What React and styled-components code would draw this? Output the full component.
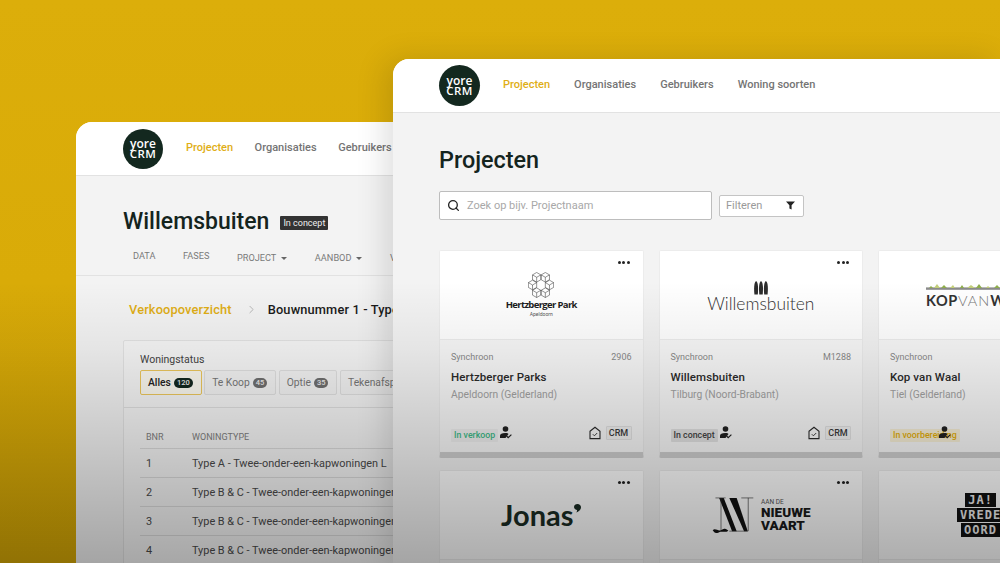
import React from "react";
import styled, { createGlobalStyle } from "styled-components";
import { Search, ChevronRight } from "lucide-react";

const Global = createGlobalStyle`
  html, body { margin: 0; padding: 0; overflow: hidden; background: #c99f06; }
  * { box-sizing: border-box; }
  body { font-family: Roboto, "Liberation Sans", sans-serif; }
`;

const Stage = styled.div`
  position: relative;
  width: 1000px;
  height: 563px;
  overflow: hidden;
  background: linear-gradient(180deg, #dcae0a 0%, #d6a806 100%);
`;
const Shade = styled.div`
  position: absolute;
  inset: 0;
  z-index: 5;
  pointer-events: none;
  background: linear-gradient(180deg, rgba(0,0,0,0) 0%, rgba(0,0,0,0) 50%, rgba(0,0,0,.06) 62%, rgba(0,0,0,.32) 100%);
`;
const Window = styled.section`
  position: absolute;
  left: ${p => p.$left}px;
  top: ${p => p.$top}px;
  width: ${p => p.$width}px;
  height: ${p => p.$height}px;
  z-index: ${p => p.$z};
  border-radius: 16px 0 0 0;
  background: #f3f3f3;
  overflow: hidden;
  box-shadow: ${p => p.$z > 1 ? "-8px 0 30px rgba(0,0,0,.13)" : "none"};
`;
const Header = styled.header`
  display: flex;
  align-items: center;
  height: ${p => p.$h}px;
  padding-left: ${p => p.$pad}px;
  background: #fff;
  border-bottom: 1px solid #e2e2e2;
`;
const LogoMark = styled.div`
  flex: none;
  width: ${p => p.$size}px;
  height: ${p => p.$size}px;
  border-radius: 50%;
  background: #13281f;
  color: #fff;
  display: flex;
  flex-direction: column;
  align-items: center;
  justify-content: center;
  font-family: "Open Sans", sans-serif;
  font-weight: 600;
  line-height: 10px;
`;
const LogoWord = styled.span`
  font-size: ${p => p.$size}px;
  letter-spacing: ${p => p.$track}px;
`;
const Nav = styled.nav`
  display: flex;
  align-items: center;
  gap: ${p => p.$gap}px;
  margin-left: 23px;
  margin-top: -2px;
`;
const NavLink = styled.span`
  font-size: 11px;
  font-weight: 500;
  white-space: nowrap;
  color: ${p => p.$active ? "#e0ae16" : "#747474"};
`;

/* front window */
const Main = styled.main`
  padding: 33px 0 0 46px;
`;
const PageTitle = styled.h1`
  margin: 0;
  font-size: 23.4px;
  line-height: 28px;
  font-weight: 500;
  color: #14241d;
`;
const Toolbar = styled.div`
  display: flex;
  align-items: center;
  gap: 7px;
  margin-top: 17px;
`;
const SearchBox = styled.div`
  display: flex;
  align-items: center;
  gap: 7px;
  width: 273px;
  height: 29px;
  padding-left: 7px;
  background: #fff;
  border: 1px solid #bdbdbd;
  border-radius: 2px;
  color: #a8a8a8;
  font-size: 11px;
  svg { color: #222; flex: none; }
`;
const FilterBox = styled.div`
  display: flex;
  align-items: center;
  justify-content: space-between;
  width: 85px;
  height: 22px;
  padding: 0 8px 0 6px;
  background: #fff;
  border: 1px solid #c4c4c4;
  border-radius: 2px;
  color: #9a9a9a;
  font-size: 11px;
`;
const CardGrid = styled.div`
  display: grid;
  grid-template-columns: repeat(3, 204.5px);
  column-gap: 15px;
  row-gap: 12px;
  margin-top: 30px;
`;
const Card = styled.article`
  display: flex;
  flex-direction: column;
  height: 208px;
  background: #f8f8f8;
  border: 1px solid #ececec;
  border-bottom: 6px solid #cfcfcf;
  border-radius: 2px;
  overflow: hidden;
`;
const CardTop = styled.div`
  position: relative;
  flex: none;
  height: 89px;
  background: #fff;
  border-bottom: 1px solid #ededed;
  display: flex;
  align-items: center;
  justify-content: ${p => p.$start ? "flex-start" : "center"};
  padding-left: ${p => p.$start || 0}px;
`;
const Dots = styled.span`
  position: absolute;
  top: 10px;
  right: 13px;
  display: flex;
  gap: 1.5px;
  i { width: 3px; height: 3px; border-radius: 50%; background: #222; }
`;
const CardBody = styled.div`
  flex: 1;
  display: flex;
  flex-direction: column;
  padding: 11px 11px 10px 11px;
`;
const MetaRow = styled.div`
  display: flex;
  justify-content: space-between;
  font-size: 9px;
  line-height: 12px;
  color: #8a8a8a;
`;
const CardName = styled.div`
  margin-top: 6px;
  font-size: 11.5px;
  line-height: 16px;
  font-weight: 500;
  color: #2b2b2b;
  letter-spacing: .1px;
`;
const CardPlace = styled.div`
  margin-top: 2px;
  font-size: 10.3px;
  line-height: 15px;
  color: #a2a2a2;
`;
const CardFoot = styled.div`
  margin-top: auto;
  display: flex;
  align-items: center;
  justify-content: space-between;
`;
const Status = styled.div`
  display: flex;
  align-items: center;
`;
const StatusSlot = styled.div`
  width: 49px;
`;
const StatusBadge = styled.span`
  display: inline-block;
  padding: 0 3px;
  height: 13px;
  line-height: 13px;
  font-size: 8.8px;
  font-weight: 500;
  white-space: nowrap;
  border-radius: 1px;
  color: ${p => p.$color};
  background: ${p => p.$bg};
`;
const Tools = styled.div`
  display: flex;
  align-items: center;
  gap: 5px;
`;
const CrmChip = styled.span`
  display: inline-block;
  width: 26px;
  height: 14px;
  line-height: 13px;
  text-align: center;
  font-size: 9px;
  font-weight: 500;
  color: #3a3a3a;
  background: #f2f2f2;
  border: 1px solid #e2e2e2;
  border-radius: 1px;
`;

/* logos */
const LogoStack = styled.div`
  display: flex;
  flex-direction: column;
  align-items: center;
  color: #1d1d1d;
  margin-top: ${p => p.$mt || 0}px;
`;
const HertzName = styled.div`
  margin-top: 1px;
  font-family: "Open Sans", sans-serif;
  font-weight: 700;
  font-size: 9.5px;
  line-height: 12px;
  letter-spacing: -.65px;
  white-space: nowrap;
`;
const HertzSub = styled.div`
  font-size: 5px;
  line-height: 6px;
  color: #555;
`;
const WillemsName = styled.div`
  font-family: Lato, sans-serif;
  font-weight: 300;
  font-size: 17.4px;
  line-height: 18px;
  color: #333;
`;
const KopWrap = styled.div`
  display: flex;
  flex-direction: column;
  white-space: nowrap;
`;
const KopName = styled.div`
  font-family: Lato, sans-serif;
  font-size: 14.5px;
  line-height: 15px;
  letter-spacing: .6px;
  font-weight: 700;
  color: #333;
  margin-top: 3px;
  span { font-weight: 300; color: #777; letter-spacing: 1px; }
`;
const JonasName = styled.div`
  display: flex;
  align-items: flex-start;
  font-family: Lato, sans-serif;
  font-weight: 700;
  font-size: 29px;
  line-height: 30px;
  color: #1a2c24;
  margin-top: -1px;
  svg { margin: 4px 0 0 1px; }
`;
const VaartLogo = styled.div`
  display: flex;
  align-items: center;
  gap: 6px;
`;
const VaartText = styled.div`
  display: flex;
  flex-direction: column;
  font-weight: 900;
  font-size: 13.5px;
  line-height: 13px;
  color: #1a1a1a;
  small { font-size: 6.5px; line-height: 8px; font-weight: 400; color: #555; }
`;
const JaLogo = styled.div`
  display: flex;
  flex-direction: column;
  align-items: center;
  gap: 1px;
  white-space: nowrap;
`;
const JaLine = styled.span`
  display: block;
  padding: 0 3px;
  background: #111;
  color: #eee;
  font-family: "DejaVu Sans Mono", monospace;
  font-weight: 700;
  font-size: 12px;
  line-height: 14px;
  letter-spacing: 1px;
`;

/* rear window */
const Rear = styled.div`
  padding: 32px 0 0 47px;
`;
const TitleRow = styled.div`
  display: flex;
  align-items: center;
  gap: 11px;
`;
const RearTitle = styled.h2`
  margin: 0;
  font-size: 23px;
  line-height: 28px;
  font-weight: 500;
  color: #14241d;
`;
const ConceptBadge = styled.span`
  margin-top: 2px;
  padding: 0 3px;
  height: 14px;
  line-height: 14px;
  font-size: 9px;
  color: #eee;
  background: #333;
  border-radius: 1px;
`;
const Tabs = styled.div`
  display: flex;
  align-items: flex-start;
  gap: 27.5px;
  margin: 14px 0 0 10px;
  height: 25px;
`;
const Tab = styled.span`
  display: flex;
  align-items: center;
  gap: 5px;
  margin-top: ${p => p.$menu ? 2 : 0}px;
  font-size: 9.2px;
  line-height: 12px;
  white-space: nowrap;
  color: #7a7a7a;
`;
const Caret = styled.i`
  width: 0;
  height: 0;
  border-left: 3.5px solid transparent;
  border-right: 3.5px solid transparent;
  border-top: 3.5px solid #666;
`;
const Rule = styled.div`
  height: 1px;
  margin-left: -47px;
  background: #e2e2e2;
`;
const Crumbs = styled.div`
  display: flex;
  align-items: center;
  margin: 25px 0 0 6px;
  height: 17px;
  font-size: 12.8px;
  font-weight: 500;
  white-space: nowrap;
  letter-spacing: .15px;
  svg { flex: none; margin: 0 10px 0 13px; color: #aaa; }
`;
const CrumbLink = styled.span`
  color: #e0ae16;
`;
const CrumbHere = styled.span`
  color: #1b1b1b;
`;
const Panel = styled.div`
  margin-top: 22px;
  background: #f6f6f6;
  border: 1px solid #e3e3e3;
  border-radius: 2px 0 0 0;
`;
const PanelHead = styled.div`
  padding: 12px 0 12px 16px;
  border-bottom: 1px solid #e0e0e0;
`;
const PanelLabel = styled.div`
  font-size: 10.5px;
  line-height: 14px;
  color: #444;
`;
const Pills = styled.div`
  display: flex;
  gap: 2.5px;
  margin-top: 3px;
`;
const Pill = styled.span`
  display: flex;
  align-items: center;
  gap: 3px;
  flex: none;
  height: 25px;
  padding: 0 8px 0 7px;
  font-size: 10.3px;
  font-weight: ${p => p.$active ? 500 : 400};
  white-space: nowrap;
  border-radius: 2px;
  color: ${p => p.$active ? "#222" : "#777"};
  background: ${p => p.$active ? "#fbf9f0" : "#f3f3f3"};
  border: 1px solid ${p => p.$active ? "#ecc75c" : "#e0e0e0"};
`;
const Count = styled.b`
  display: inline-block;
  min-width: 14px;
  height: 10px;
  padding: 0 3px;
  line-height: 10px;
  border-radius: 5px;
  font-size: 7.5px;
  font-weight: 500;
  text-align: center;
  color: #eee;
  background: ${p => p.$dark ? "#13281f" : "#6f6f6f"};
`;
const Table = styled.div`
  padding: 17px 0 0 16px;
`;
const TableRow = styled.div`
  display: grid;
  grid-template-columns: 46px 1fr;
  align-items: center;
  height: ${p => p.$head ? 24 : 29}px;
  padding-left: 6px;
  white-space: nowrap;
  border-bottom: 1px solid #dcdcdc;
  font-size: ${p => p.$head ? 9 : 10.9}px;
  color: ${p => p.$head ? "#808080" : "#4a4a4a"};
`;

const Cube = ({ x, y }) => (
  <g transform={`translate(${x} ${y})`} fill="none" stroke="#333" strokeWidth=".55">
    <path d="M0-5 4.3-2.5V2.5L0 5-4.3 2.5V-2.5Z" />
    <path d="M-4.3-2.5 0 0 4.3-2.5M0 0V5" />
  </g>
);
const HertzIcon = () => (
  <svg width="26" height="26" viewBox="-13.5 -13.5 27 27" aria-hidden="true">
    <Cube x={-4.5} y={-8} />
    <Cube x={4.5} y={-8} />
    <Cube x={-8.8} y={0} />
    <Cube x={8.8} y={0} />
    <Cube x={-4.5} y={8} />
    <Cube x={4.5} y={8} />
  </svg>
);
const PlumeIcon = () => (
  <svg width="14" height="14" viewBox="0 0 14 14" aria-hidden="true" fill="#2c2c2c">
    <path d="M.4 13.5C-.2 7 0 1.5 2.1 0 4.2 1.5 4.4 7 3.8 13.5Z" />
    <path d="M5.3 13.5C4.7 7 4.9 1.5 7 0 9.1 1.5 9.3 7 8.7 13.5Z" />
    <path d="M10.2 13.5C9.6 7 9.8 1.5 11.9 0 14 1.5 14.2 7 13.6 13.5Z" />
  </svg>
);
const Treeline = () => (
  <svg width="120" height="7" viewBox="0 0 120 7" aria-hidden="true" style={{ display: "block" }}>
    <rect x="0" y="4.4" width="120" height="2.4" fill="#8b8b8b" />
    <path d="M3 5 5 3 7 5ZM15 5 18 2 21 5ZM34 5 36 2 38 5ZM50 5 53 1 56 5ZM68 5 71 2 74 5ZM90 5 93 2 96 5Z" fill="#8fae4c" />
    <path d="M8 5 11 1 14 5ZM24 5 27 2 29 5ZM41 5 45 2 49 5ZM60 5 62 3 64 5ZM80 5 83 1 86 5ZM100 5 104 1 108 5Z" fill="#c3cf7a" />
  </svg>
);
const VaartIcon = () => (
  <svg width="44" height="36" viewBox="0 0 44 39" aria-hidden="true">
    <path d="M7 1H12L26 37H21Z" fill="#111" />
    <path d="M18 1H26L38 37H34Z" fill="#111" />
    <path d="M3 1H14M31 1H44M38.5 1V37M9 1V36M18 37H38" stroke="#333" strokeWidth=".7" fill="none" />
    <path d="M0 36C3 33 6 38 10 35.5S15 35 17 36.5C14 39 10 36.5 7 38.2S2 39 0 36Z" fill="#111" />
  </svg>
);
const JonasMark = () => (
  <svg width="7" height="9" viewBox="0 0 7 9" aria-hidden="true">
    <path d="M3.5 0C5.5 0 7 1.4 7 3.2 7 5.5 4.8 7.8 2.4 8.6 3 7.2 3.2 6.3 3 5.9 1.4 5.7 0 4.6 0 3 0 1.3 1.6 0 3.5 0Z" fill="#1a2c24" />
  </svg>
);
const PersonCheck = () => (
  <svg width="12" height="13" viewBox="0 0 12 13" aria-hidden="true">
    <circle cx="5.5" cy="3" r="2.8" fill="#222" />
    <path d="M0 12V9.8C0 8 2 7 5 7S8 7.5 8.5 8L5.5 12Z" fill="#222" />
    <path d="M6.6 10 8.2 11.6 11.4 8.6" stroke="#222" strokeWidth="1.2" fill="none" />
  </svg>
);
const HouseCheck = () => (
  <svg width="12" height="14" viewBox="0 0 12 14" aria-hidden="true" fill="none" stroke="#2a2a2a">
    <path d="M1 5.2 6 1.2 11 5.2V12.6H1Z" strokeWidth="1.1" />
    <path d="M3.8 8.2 5.4 9.8 8.2 7" strokeWidth=".9" />
  </svg>
);
const Funnel = () => (
  <svg width="9" height="9" viewBox="0 0 9 9" aria-hidden="true">
    <path d="M0 .5H9L5.6 4.3V8.6L3.4 7.4V4.3Z" fill="#222" />
  </svg>
);

const MoreDots = () => <Dots><i /><i /><i /></Dots>;

const CardItem = ({ logo, meta, code, name, place, badge, bg, color, cut, start }) => (
  <Card>
    <CardTop $start={start}>
      {logo}
      {!cut && <MoreDots />}
    </CardTop>
    <CardBody>
      <MetaRow><span>{meta}</span><span>{code}</span></MetaRow>
      <CardName>{name}</CardName>
      <CardPlace>{place}</CardPlace>
      <CardFoot>
        <Status>
          <StatusSlot><StatusBadge $bg={bg} $color={color}>{badge}</StatusBadge></StatusSlot>
          <PersonCheck />
        </Status>
        <Tools><HouseCheck /><CrmChip>CRM</CrmChip></Tools>
      </CardFoot>
    </CardBody>
  </Card>
);

const Logo = ({ size }) => (
  <LogoMark $size={size}>
    <LogoWord $size={12} $track={0}>yore</LogoWord>
    <LogoWord $size={11.5} $track={.5}>CRM</LogoWord>
  </LogoMark>
);

const rows = [
  ["1", "Type A - Twee-onder-een-kapwoningen L"],
  ["2", "Type B & C - Twee-onder-een-kapwoningen M"],
  ["3", "Type B & C - Twee-onder-een-kapwoningen M"],
  ["4", "Type B & C - Twee-onder-een-kapwoningen M"],
];

export default function App() {
  return (
    <Stage>
      <Global />
      <Window $left={76} $top={122} $width={330} $height={441} $z={1}>
        <Header $h={54} $pad={47}>
          <Logo size={40} />
          <Nav $gap={21.5}>
            <NavLink $active>Projecten</NavLink>
            <NavLink>Organisaties</NavLink>
            <NavLink>Gebruikers</NavLink>
          </Nav>
        </Header>
        <Rear>
          <TitleRow>
            <RearTitle>Willemsbuiten</RearTitle>
            <ConceptBadge>In concept</ConceptBadge>
          </TitleRow>
          <Tabs>
            <Tab>DATA</Tab>
            <Tab>FASES</Tab>
            <Tab $menu>PROJECT <Caret /></Tab>
            <Tab $menu>AANBOD <Caret /></Tab>
            <Tab $menu>VERKOOP</Tab>
          </Tabs>
          <Rule />
          <Crumbs>
            <CrumbLink>Verkoopoverzicht</CrumbLink>
            <ChevronRight size={13} strokeWidth={1.5} />
            <CrumbHere>Bouwnummer 1 - Type A</CrumbHere>
          </Crumbs>
          <Panel>
            <PanelHead>
              <PanelLabel>Woningstatus</PanelLabel>
              <Pills>
                <Pill $active>Alles <Count $dark>120</Count></Pill>
                <Pill>Te Koop <Count>45</Count></Pill>
                <Pill>Optie <Count>35</Count></Pill>
                <Pill>Tekenafspraak</Pill>
              </Pills>
            </PanelHead>
            <Table>
              <TableRow $head><span>BNR</span><span>WONINGTYPE</span></TableRow>
              {rows.map(([n, t]) => (
                <TableRow key={n}><span>{n}</span><span>{t}</span></TableRow>
              ))}
            </Table>
          </Panel>
        </Rear>
      </Window>

      <Window $left={393} $top={59} $width={607} $height={504} $z={2}>
        <Header $h={54} $pad={46}>
          <Logo size={41} />
          <Nav $gap={24}>
            <NavLink $active>Projecten</NavLink>
            <NavLink>Organisaties</NavLink>
            <NavLink>Gebruikers</NavLink>
            <NavLink>Woning soorten</NavLink>
          </Nav>
        </Header>
        <Main>
          <PageTitle>Projecten</PageTitle>
          <Toolbar>
            <SearchBox><Search size={13} strokeWidth={2.4} />Zoek op bijv. Projectnaam</SearchBox>
            <FilterBox>Filteren<Funnel /></FilterBox>
          </Toolbar>
          <CardGrid>
            <CardItem
              logo={<LogoStack $mt={-1}><HertzIcon /><HertzName>Hertzberger Park</HertzName><HertzSub>Apeldoorn</HertzSub></LogoStack>}
              meta="Synchroon" code="2906" name="Hertzberger Parks" place="Apeldoorn (Gelderland)"
              badge="In verkoop" bg="#efefef" color="#3dba88"
            />
            <CardItem
              logo={<LogoStack $mt={3}><PlumeIcon /><WillemsName>Willemsbuiten</WillemsName></LogoStack>}
              meta="Synchroon" code="M1288" name="Willemsbuiten" place="Tilburg (Noord-Brabant)"
              badge="In concept" bg="#e2e2e2" color="#444"
            />
            <CardItem
              start={47}
              logo={<KopWrap><Treeline /><KopName>KOP<span>VAN</span>WAAL</KopName></KopWrap>}
              meta="Synchroon" code="" name="Kop van Waal" place="Tiel (Gelderland)"
              badge="In voorbereiding" bg="#f7efd6" color="#e4ae08" cut
            />
            <CardItem logo={<JonasName>Jonas<JonasMark /></JonasName>} meta="" code="" name="" place="" badge="" bg="none" color="#333" />
            <CardItem
              logo={<VaartLogo><VaartIcon /><VaartText><small>AAN DE</small><span>NIEUWE</span><span>VAART</span></VaartText></VaartLogo>}
              meta="" code="" name="" place="" badge="" bg="none" color="#333"
            />
            <CardItem
              start={78}
              logo={<JaLogo><JaLine>JA!</JaLine><JaLine>VREDE</JaLine><JaLine>OORD</JaLine></JaLogo>}
              meta="" code="" name="" place="" badge="" bg="none" color="#333" cut
            />
          </CardGrid>
        </Main>
      </Window>
      <Shade />
    </Stage>
  );
}
